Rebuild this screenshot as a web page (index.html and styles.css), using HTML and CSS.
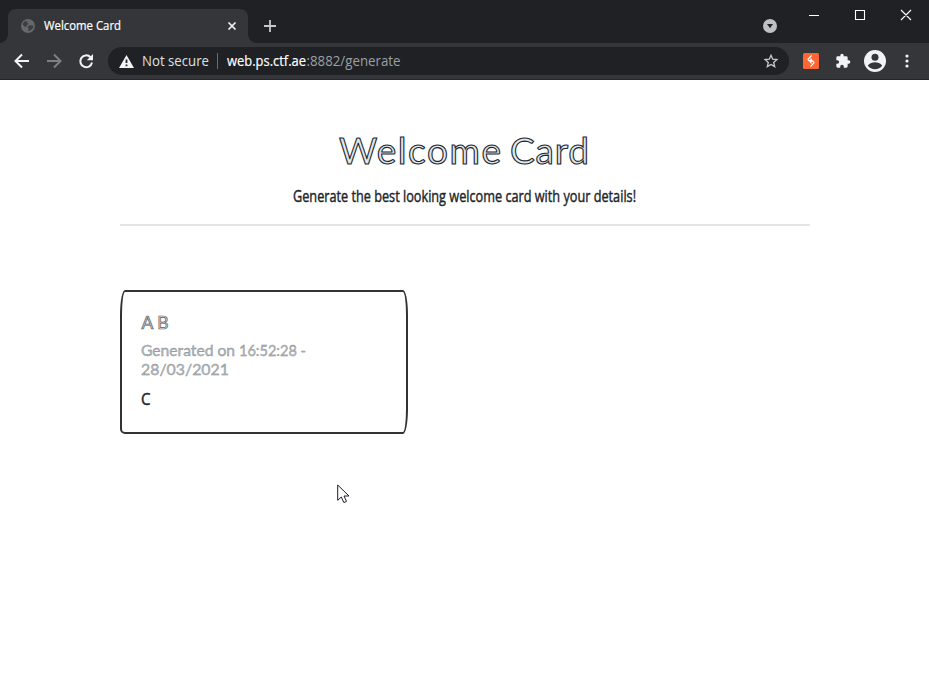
FILE: index.html
```html
<!DOCTYPE html>
<html lang="en">
<head>
<meta charset="utf-8">
<title>Welcome Card</title>
<link rel="stylesheet" href="styles.css">
</head>
<body>
<header class="browser">
  <div class="tabstrip">
    <div class="tab">
      <svg class="globe" width="14" height="14" viewBox="0 0 14 14"><circle cx="7" cy="7" r="7" fill="#66686c"/><path d="M1.500 5l2-2.500L6.500 2 6 4l1.800.8L6 6.200l-.5 1.300-2 .2zM6.500 8l2.500-2 3.500.8-.8 2.700L8.500 12l-1.500-.5.8-1.700z" fill="#3c3d41"/></svg>
      <svg class="tab-title" width="80" height="20"><text x="0" y="14" textLength="77" lengthAdjust="spacingAndGlyphs">Welcome Card</text></svg>
      <svg class="tab-close" width="8" height="8" viewBox="0 0 8 8"><path d="M.5.5l7 7M7.500.5l-7 7" stroke="#f1f3f4" stroke-width="1.700"/></svg>
    </div>
    <svg class="new-tab" width="12" height="12" viewBox="0 0 12 12"><path d="M6 0v12M0 6h12" stroke="#c6c8ca" stroke-width="1.800"/></svg>
    <svg class="tab-search" width="14" height="14" viewBox="0 0 14 14"><circle cx="7" cy="7" r="7" fill="#bdc1c6"/><path d="M4 5h6L7 9.300z" fill="#202124"/></svg>
    <svg class="window-buttons" width="102" height="12" viewBox="0 0 102 12"><path d="M0 6.500h10M46.500 1.500h9v9h-9zM92 1l10 10M102 1L92 11" fill="none" stroke="#fff" stroke-width="1.100"/></svg>
  </div>
  <div class="toolbar">
    <svg class="nav-icons" width="80" height="16" viewBox="0 0 80 16">
      <path d="M15 8H2M8 1.500L1.500 8 8 14.500" fill="none" stroke="#f1f3f4" stroke-width="2"/>
      <path d="M33 8h13M40 1.500L46.500 8 40 14.500" fill="none" stroke="#7d7f83" stroke-width="2"/>
      <path d="M76.500 4.200A5.900 5.900 0 1 0 78 9.500" fill="none" stroke="#f1f3f4" stroke-width="2"/><path d="M79 1v6.200h-6.200z" fill="#f1f3f4"/>
    </svg>
    <div class="omnibox">
      <svg class="warning" width="15" height="13" viewBox="0 0 15 13"><path d="M7.500 0L15 13H0z" fill="#f1f3f4"/><path d="M7.500 4.500v3.500M7.500 9.500v1.700" stroke="#202124" stroke-width="1.800"/></svg>
      <svg class="address" width="262" height="22"><text class="security" x="0" y="16" textLength="67" lengthAdjust="spacingAndGlyphs">Not secure</text><path d="M75.500 3v16" stroke="#6b6d71"/><text class="host" x="85" y="16" textLength="79" lengthAdjust="spacingAndGlyphs">web.ps.ctf.ae</text><text class="path" x="164.500" y="16" textLength="94" lengthAdjust="spacingAndGlyphs">:8882/generate</text></svg>
      <svg class="star" width="14" height="14" viewBox="0 0 14 14"><path d="M7 1.300l1.700 3.900 4.200.4-3.200 2.800 1 4.200L7 10.400l-3.700 2.200 1-4.200L1.100 5.600l4.200-.4z" fill="none" stroke="#c8cacd" stroke-width="1.300"/></svg>
    </div>
    <svg class="burp" width="16" height="16" viewBox="0 0 16 16"><rect width="16" height="16" rx="1.500" fill="#ff6633"/><path d="M8.700 2.300L5 6.300l1 1.400h3L7.500 5.500M7.500 13.700L11 9.700l-1-1.500H7l1.500 2.300" fill="none" stroke="#fff" stroke-width="1.200"/></svg>
    <svg class="puzzle" width="16" height="16" viewBox="0 0 24 24"><path d="M20.500 11H19V7a2 2 0 0 0-2-2h-4V3.500a2.500 2.500 0 0 0-5 0V5H4a2 2 0 0 0-2 2v3.800h1.500a2.700 2.700 0 0 1 0 5.400H2V20a2 2 0 0 0 2 2h3.800v-1.500a2.700 2.700 0 0 1 5.400 0V22H17a2 2 0 0 0 2-2v-4h1.500a2.500 2.500 0 0 0 0-5z" fill="#f1f3f4"/></svg>
    <svg class="profile" width="22" height="22" viewBox="0 0 22 22"><circle cx="11" cy="11" r="11" fill="#f1f3f4"/><circle cx="11" cy="7.300" r="3.500" fill="#35363a"/><path d="M3.800 15.500C5.500 12.800 8.500 12.200 11 12.200s5.500.6 7.200 3.300C16.500 18 14 19.200 11 19.200S5.500 18 3.800 15.500z" fill="#35363a"/></svg>
    <svg class="kebab" width="4" height="14" viewBox="0 0 4 14"><g fill="#f1f3f4"><circle cx="2" cy="2" r="1.600"/><circle cx="2" cy="7" r="1.600"/><circle cx="2" cy="12" r="1.600"/></g></svg>
  </div>
</header>
<main class="container">
  <h1><svg width="252" height="44"><text class="sketch" x="0" y="34.500" textLength="162" lengthAdjust="spacing">Welcome</text><text class="sketch" x="171" y="34.500" textLength="79" lengthAdjust="spacing">Card</text></svg></h1>
  <p class="lead"><svg width="344" height="24"><text class="hand" x="0" y="15.500" textLength="343" lengthAdjust="spacingAndGlyphs">Generate the best looking welcome card with your details!</text></svg></p>
  <hr>
  <section class="card">
    <h4><svg width="180" height="24"><text class="name" x="0.500" y="19" textLength="27" lengthAdjust="spacingAndGlyphs">A B</text></svg></h4>
    <h6><svg width="180" height="44"><text class="date" x="0" y="22" textLength="94" lengthAdjust="spacingAndGlyphs">Generated on</text><text class="date" x="98" y="22" textLength="67" lengthAdjust="spacingAndGlyphs">16:52:28 -</text><text class="date" x="0" y="41" textLength="88" lengthAdjust="spacingAndGlyphs">28/03/2021</text></svg></h6>
    <p><svg width="180" height="30"><text class="hand" x="0" y="28" textLength="9.500" lengthAdjust="spacingAndGlyphs">C</text></svg></p>
  </section>
</main>
<svg class="cursor" width="13" height="20" viewBox="0 0 13 20"><path d="M.7 1v15.300l3.600-3.300 2.600 5.600 2.600-1.200L7 12h5z" fill="#fff" stroke="#1c1c28" stroke-width="1"/></svg>
</body>
</html>
```
FILE: styles.css
```css
* { box-sizing: border-box; }
body { margin: 0; height: 687px; overflow: hidden; background: #fff; font-family: "Open Sans", sans-serif; }
svg { display: block; flex: none; overflow: visible; }
h1, h4, h6, p { margin: 0; font-weight: 400; }

.browser { height: 80px; background: #35363a; border-bottom: 1px solid #242528; }
.tabstrip { display: flex; height: 43px; padding: 9px 0 0 8px; background: #202124; }
.tab { position: relative; display: flex; width: 240px; height: 34px; padding: 10px 12px 0 13px; border-radius: 8px 8px 0 0; background: #35363a; }
.tab::before, .tab::after { content: ""; position: absolute; bottom: 0; width: 8px; height: 8px; }
.tab::before { left: -8px; background: radial-gradient(circle at 0 0, #202124 7.5px, #35363a 8px); }
.tab::after { right: -8px; background: radial-gradient(circle at 100% 0, #202124 7.5px, #35363a 8px); }
.tab-title { margin: -3px 0 0 9px; fill: #fff; stroke: #fff; stroke-width: .2; font-size: 12px; }
.tab-close { margin: 3px 0 0 auto; }
.new-tab { margin: 11px 0 0 16px; }
.tab-search { margin: 10px 0 0 auto; }
.window-buttons { margin: 0 18px 0 32px; }

.toolbar { display: flex; align-items: center; height: 36px; padding: 0 20px 0 14px; }
.nav-icons { margin-right: 14px; }
.omnibox { display: flex; align-items: center; width: 681px; height: 28px; padding: 0 11px; border-radius: 14px; background: #202124; }
.address { margin-left: 8px; font-size: 14px; }
.security { fill: #dfe0e3; }
.host { fill: #fff; stroke: #fff; stroke-width: .2; }
.path { fill: #9aa0a6; }
.star { margin-left: auto; }
.burp { margin-left: 14px; }
.puzzle { margin-left: 16px; }
.profile { margin-left: 13px; }
.kebab { margin-left: auto; }

.container { width: 690px; margin: 0 0 0 120px; padding-top: 49px; }
h1 { display: flex; justify-content: center; }
.lead { display: flex; justify-content: center; margin-top: 13px; }
.sketch { fill: #e4e7ea; stroke: #202830; stroke-width: 1.1; font: 400 37px Lato, sans-serif; }
.hand { fill: #212529; stroke: #212529; stroke-width: .45; font: 400 16.5px "Open Sans", sans-serif; }
hr { height: 2px; margin: 14px 0 0; border: 0; background: #e5e5e5; }
.card { width: 288px; height: 144px; margin-top: 64px; padding: 18px 19px; border: 2px solid #333; border-radius: 5px / 25px 25px 25px 5px; }
.name { fill: #dcdfe1; stroke: #555b61; stroke-width: .7; font: 400 17.5px Lato, sans-serif; }
.date { fill: #b4b9bd; stroke: #7d858c; stroke-width: .35; font: 400 15px Lato, sans-serif; }
.card p { margin-top: -1px; }
.cursor { position: absolute; left: 337px; top: 484px; }
```
